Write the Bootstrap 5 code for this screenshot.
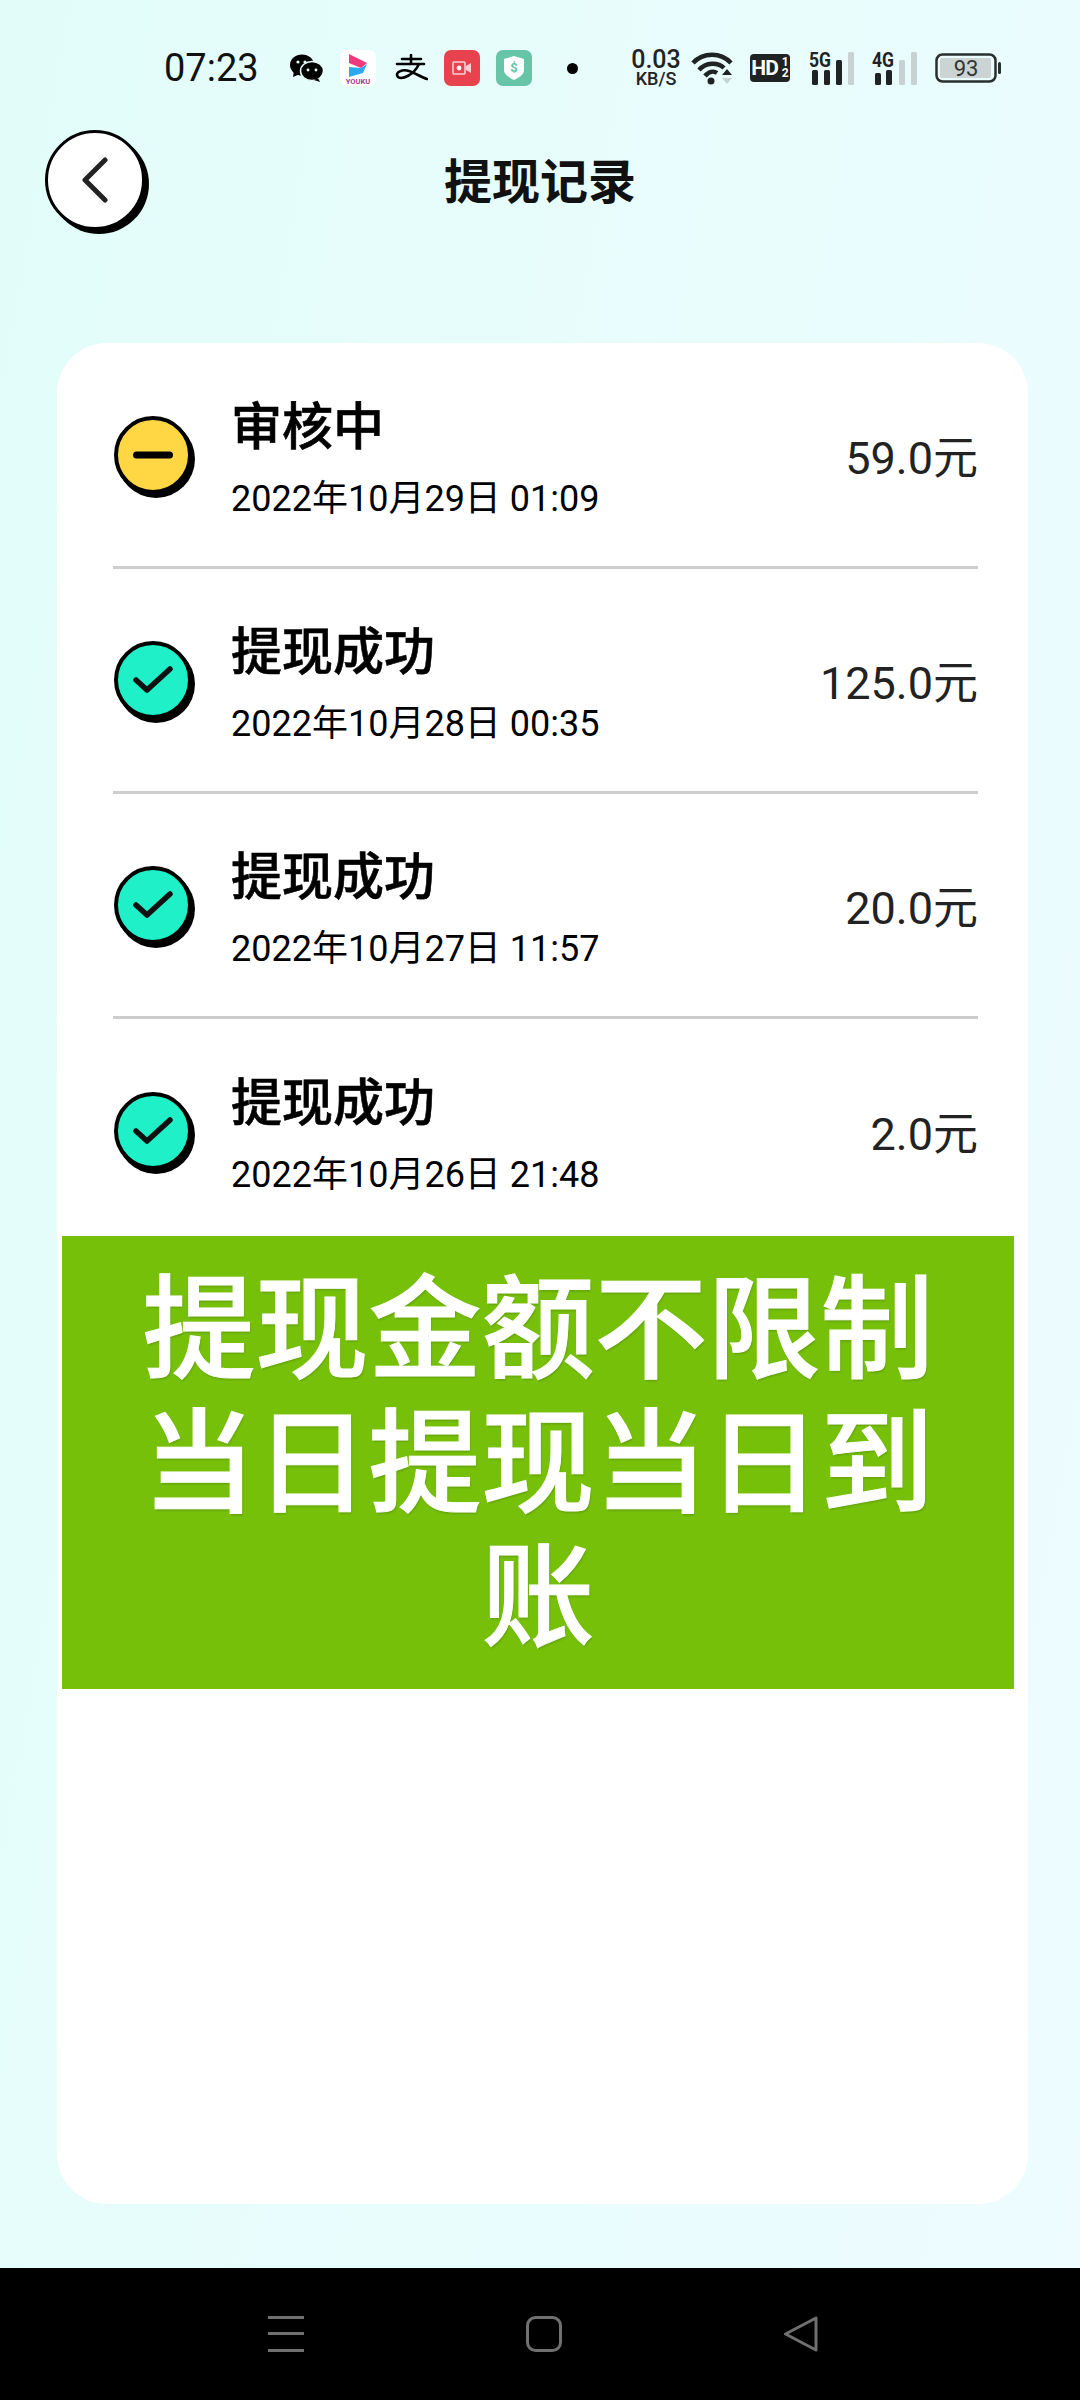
<!DOCTYPE html>
<html lang="zh-CN">
<head>
    <meta charset="UTF-8">
    <meta name="viewport" content="width=device-width, initial-scale=1.0">
    <title>提现记录</title>
    <link href="https://cdn.jsdelivr.net/npm/bootstrap@5.3.0/dist/css/bootstrap.min.css" rel="stylesheet">
    <style>
        body {
            width: 1080px;
            height: 2400px;
            font-family: Roboto, "Noto Sans CJK SC", sans-serif;
            background: linear-gradient(100deg, #e2fdf9 0%, #eefcff 100%);
            color: #000;
        }
        .page-wrap { height: 2400px; }

        /* status bar */
        .status-line { height: 40px; margin-top: 48px; margin-bottom: 42px; padding-left: 164px; }
        .st-time { width: 94px; font-size: 38px; line-height: 40px; color: #111; }
        .st-tile { width: 36px; height: 36px; border-radius: 7px; }
        .st-red { background: #e8424f; }
        .st-green { background: #66c4a7; }
        .st-white { background: #fff; }
        .st-speed { width: 50px; font-weight: 500; color: #1f2323; }
        .st-speed b { font-size: 25px; line-height: 22px; font-weight: 500; }
        .st-speed i { font-style: normal; font-size: 18px; line-height: 16px; font-weight: 500; }
        .st-hd { width: 40px; height: 28px; background: #1f2323; border-radius: 4px; color: #fff; font-size: 21px; font-weight: 700; line-height: 28px; letter-spacing: -1px; }
        .st-hd span { font-size: 12px; line-height: 11px; letter-spacing: 0; }
        .st-net { width: 47px; height: 42px; margin-bottom: 8px; }
        .ms-32 { margin-left: 32px; }
        .ms-17 { margin-left: 17px; }
        .ms-19 { margin-left: 19px; }
        .ms-35 { margin-left: 35px; }
        .ms-53 { margin-left: 53px; }
        .ms-10 { margin-left: 10px; }
        .ms-15 { margin-left: 15px; }

        /* header */
        .head-grid { display: grid; grid-template-columns: 1fr auto 1fr; height: 105px; }
        .back-cell { padding-left: 45px; }
        .back-round { width: 100px; height: 100px; border: 3px solid #000; background: #fff; box-shadow: 4px 4px 0 #000; }
        .head-title { font-size: 48px; font-weight: 700; line-height: 105px; color: #111; }

        /* records */
        .rec-card { margin: 108px 0 0 57px; width: 971px; height: 1861px; border-radius: 50px; overflow: hidden; background: #fff; }
        .rec-row { margin: 0 50px 0 56px; }
        .rec-row.with-line { border-bottom: 3px solid #cdcdcd; height: 225px; }
        .rec-row.first-one { height: 226px; }
        .rec-row.last-one { height: 217px; padding-top: 6px; }
        .state-dot { width: 78px; height: 78px; border: 4px solid #000; box-shadow: 3px 4px 0 #000; flex: none; margin-left: 1px; }
        .dot-wait { background: #ffd745; }
        .dot-ok { background: #1ff0c8; }
        .rec-text { margin-left: 39px; padding-top: 10px; }
        .rec-name { font-size: 51px; font-weight: 500; line-height: 60px; margin-bottom: 18px; -webkit-text-stroke: .6px #000; }
        .rec-date { font-size: 36px; line-height: 46px; color: #000; }
        .rec-sum { font-size: 45px; color: #222; padding-top: 8px; }

        .promo-box { margin-left: 5px; width: 952px; height: 453px; background: #76c00a; padding-top: 28px; color: #fff; font-size: 113px; font-weight: 500; line-height: 134px; text-align: center; text-shadow: 1px 2px 2px rgba(0,0,0,.15); -webkit-text-stroke: 1px #fff; }
        .promo-box div { padding: 0 30px; }

        /* nav bar */
        .nav-bottom { height: 132px; background: #000; padding-left: 268px; gap: 222px; }
    </style>
</head>

<body>
    <div class="page-wrap d-flex flex-column">

        <!-- status bar -->
        <div class="status-line d-flex align-items-center">
            <div class="st-time">07:23</div>
            <svg class="ms-32" width="33" height="28" viewBox="0 0 33 28">
                <ellipse cx="12" cy="11" rx="12" ry="10.5" fill="#000"/>
                <path d="M4 17l-1 6 7-3z" fill="#000"/>
                <ellipse cx="22" cy="17" rx="11.5" ry="9.5" fill="#000" stroke="#e3fdfa" stroke-width="1.5"/>
                <path d="M28 24l2 4-6-2z" fill="#000"/>
                <circle cx="8" cy="8" r="1.6" fill="#e3fdfa"/><circle cx="15" cy="8" r="1.6" fill="#e3fdfa"/>
                <circle cx="18" cy="16" r="1.4" fill="#e3fdfa"/><circle cx="26" cy="16" r="1.4" fill="#e3fdfa"/>
            </svg>
            <svg class="st-tile st-white ms-17" viewBox="0 0 36 36">
                <path d="M9 4l18 9-6 5-12-5z" fill="#ee3a7c"/>
                <path d="M9 17l12 1 6-4-4 9-14 4z" fill="#2aa9ec"/>
                <text x="18" y="34" font-size="7.5" font-weight="700" text-anchor="middle" fill="#a63a8c" font-family="Roboto">YOUKU</text>
            </svg>
            <svg class="ms-19" width="33" height="28" viewBox="0 0 33 28">
                <path d="M16 1v9M7 5h19M2 10h27M24 10C19 21 7 26 3 23C-1 18 8 15 14 17C20 19 26 23 32 25" fill="none" stroke="#000" stroke-width="2.6" stroke-linecap="round"/>
            </svg>
            <div class="st-tile st-red ms-3 d-flex align-items-center justify-content-center">
                <svg width="20" height="14" viewBox="0 0 20 14">
                    <rect x="1" y="1" width="12" height="12" rx="1" fill="none" stroke="#fbd0d3" stroke-width="1.6"/>
                    <circle cx="7" cy="7" r="2.4" fill="#fff"/>
                    <path d="M14 5l5-3v10l-5-3z" fill="#fbd0d3"/>
                </svg>
            </div>
            <div class="st-tile st-green ms-3 d-flex align-items-center justify-content-center">
                <svg width="22" height="26" viewBox="0 0 22 26">
                    <path d="M1 4l10-3 10 3v11c0 5-6 8-10 10-4-2-10-5-10-10z" fill="#fff"/>
                    <text x="11" y="17" font-size="13" font-weight="700" text-anchor="middle" fill="#66c4a7" font-family="Roboto">$</text>
                </svg>
            </div>
            <svg class="ms-35" width="11" height="11" viewBox="0 0 11 11"><circle cx="5.5" cy="5.5" r="5.5" fill="#000"/></svg>
            <div class="st-speed ms-53 d-flex flex-column align-items-center"><b>0.03</b><i>KB/S</i></div>
            <svg class="ms-10" width="44" height="34" viewBox="0 0 44 34">
                <g fill="none" stroke="#1f2323" stroke-width="4.5">
                    <path d="M2 12C12 1 30 1 40 12"/>
                    <path d="M8 19C15 11 27 11 33 17"/>
                    <path d="M14 25C18 20 23 20 26 22"/>
                </g>
                <circle cx="20" cy="30" r="3.5" fill="#1f2323"/>
                <path d="M31 24l5-6 5 6z" fill="#1f2323"/>
                <path d="M31 27h10l-5 6z" fill="#c9d2d2"/>
            </svg>
            <div class="st-hd ms-15 d-flex align-items-center justify-content-center">HD<span class="d-flex flex-column ms-1"><span>1</span><span>2</span></span></div>
            <svg class="st-net ms-19" viewBox="0 -8 47 42">
                <text x="0" y="16" font-size="21" font-weight="700" fill="#1f2323" font-family="Roboto" textLength="22" lengthAdjust="spacingAndGlyphs">5G</text>
                <rect x="3" y="19" width="6" height="15" rx="1.5" fill="#1f2323"/>
                <rect x="15" y="19" width="6" height="15" rx="1.5" fill="#1f2323"/>
                <rect x="27" y="9" width="6" height="25" rx="1.5" fill="#1f2323"/>
                <rect x="39" y="1" width="6" height="33" rx="1.5" fill="#c9d2d2"/>
            </svg>
            <svg class="st-net ms-3" viewBox="0 -8 47 42">
                <text x="0" y="16" font-size="21" font-weight="700" fill="#1f2323" font-family="Roboto" textLength="22" lengthAdjust="spacingAndGlyphs">4G</text>
                <rect x="3" y="22" width="6" height="12" rx="1.5" fill="#1f2323"/>
                <rect x="14" y="19" width="6" height="15" rx="1.5" fill="#1f2323"/>
                <rect x="27" y="9" width="6" height="25" rx="1.5" fill="#c9d2d2"/>
                <rect x="39" y="1" width="6" height="33" rx="1.5" fill="#c9d2d2"/>
            </svg>
            <svg class="ms-3" width="67" height="30" viewBox="0 0 67 30">
                <rect x="1.5" y="1.5" width="59" height="27" rx="6" fill="none" stroke="#2a2e2e" stroke-width="2.5"/>
                <rect x="5" y="5" width="51" height="20" rx="2" fill="#cbd3d3"/>
                <rect x="63" y="9" width="3" height="12" rx="1.5" fill="#2a2e2e"/>
                <text x="31" y="23" font-size="22" text-anchor="middle" fill="#333" font-family="Roboto">93</text>
            </svg>
        </div>

        <!-- header -->
        <div class="head-grid">
            <div class="back-cell">
                <div class="back-round rounded-circle d-flex align-items-center justify-content-center">
                    <svg width="30" height="46" viewBox="0 0 30 46"><path d="M25 3L5 23l20 20" fill="none" stroke="#222" stroke-width="5" stroke-linecap="round" stroke-linejoin="round"/></svg>
                </div>
            </div>
            <div class="head-title">提现记录</div>
            <div></div>
        </div>

        <!-- records list -->
        <div class="rec-card card border-0">
            <div class="rec-row with-line first-one d-flex align-items-center">
                <div class="state-dot dot-wait rounded-circle d-flex align-items-center justify-content-center">
                    <svg width="40" height="8" viewBox="0 0 40 8"><rect width="40" height="7" y="0.5" rx="3.5" fill="#000"/></svg>
                </div>
                <div class="rec-text flex-grow-1">
                    <div class="rec-name">审核中</div>
                    <div class="rec-date">2022年10月29日 01:09</div>
                </div>
                <div class="rec-sum">59.0元</div>
            </div>
            <div class="rec-row with-line d-flex align-items-center">
                <div class="state-dot dot-ok rounded-circle d-flex align-items-center justify-content-center">
                    <svg width="40" height="28" viewBox="0 0 40 28"><path d="M3 14l11 10L37 3" fill="none" stroke="#111" stroke-width="5.5" stroke-linecap="round" stroke-linejoin="round"/></svg>
                </div>
                <div class="rec-text flex-grow-1">
                    <div class="rec-name">提现成功</div>
                    <div class="rec-date">2022年10月28日 00:35</div>
                </div>
                <div class="rec-sum">125.0元</div>
            </div>
            <div class="rec-row with-line d-flex align-items-center">
                <div class="state-dot dot-ok rounded-circle d-flex align-items-center justify-content-center">
                    <svg width="40" height="28" viewBox="0 0 40 28"><path d="M3 14l11 10L37 3" fill="none" stroke="#111" stroke-width="5.5" stroke-linecap="round" stroke-linejoin="round"/></svg>
                </div>
                <div class="rec-text flex-grow-1">
                    <div class="rec-name">提现成功</div>
                    <div class="rec-date">2022年10月27日 11:57</div>
                </div>
                <div class="rec-sum">20.0元</div>
            </div>
            <div class="rec-row last-one d-flex align-items-center">
                <div class="state-dot dot-ok rounded-circle d-flex align-items-center justify-content-center">
                    <svg width="40" height="28" viewBox="0 0 40 28"><path d="M3 14l11 10L37 3" fill="none" stroke="#111" stroke-width="5.5" stroke-linecap="round" stroke-linejoin="round"/></svg>
                </div>
                <div class="rec-text flex-grow-1">
                    <div class="rec-name">提现成功</div>
                    <div class="rec-date">2022年10月26日 21:48</div>
                </div>
                <div class="rec-sum">2.0元</div>
            </div>
            <div class="promo-box">
                <div>提现金额不限制<br>当日提现当日到<br>账</div>
            </div>
        </div>

        <!-- system nav -->
        <div class="nav-bottom mt-auto d-flex align-items-center">
            <svg width="36" height="36" viewBox="0 0 36 36"><g fill="#707070"><rect y="0" width="36" height="3"/><rect y="16" width="36" height="3"/><rect y="33" width="36" height="3"/></g></svg>
            <svg width="36" height="36" viewBox="0 0 36 36"><rect x="1.5" y="1.5" width="33" height="33" rx="8" fill="none" stroke="#707070" stroke-width="3"/></svg>
            <svg width="36" height="36" viewBox="0 0 36 36"><path d="M32 2v32L1.5 18z" fill="none" stroke="#707070" stroke-width="3" stroke-linejoin="round"/></svg>
        </div>
    </div>
    <script src="https://cdn.jsdelivr.net/npm/bootstrap@5.3.0/dist/js/bootstrap.bundle.min.js"></script>
</body>
</html>
